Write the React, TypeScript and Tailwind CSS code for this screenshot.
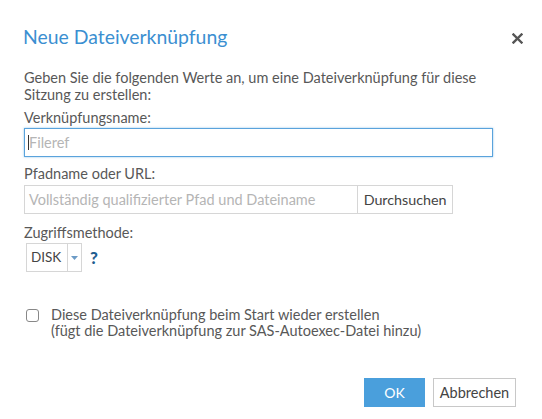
const font = { fontFamily: "Lato, 'Open Sans', sans-serif" };

export default function App() {
  return (
    <div className="h-[419px] w-[542px] bg-white text-[14.5px] text-[#585858]" style={font}>
      {/* header */}
      <div className="flex items-center justify-between pl-[23px] pr-[19px] pt-[25px]">
        <h1 className="text-[19.4px] leading-[24px] text-[#3b8fd1]">Neue Dateiverknüpfung</h1>
        <svg width="11" height="11" viewBox="0 0 11 11" className="mt-[2px]">
          <path d="M1.5 1.5 L9.5 9.5 M9.5 1.5 L1.5 9.5" stroke="#555" strokeWidth="2.4" strokeLinecap="square" />
        </svg>
      </div>

      <div className="px-[24px] pt-[20px]">
        <p className="leading-[17px]">
          Geben Sie die folgenden Werte an, um eine Dateiverknüpfung für diese
          <br />
          Sitzung zu erstellen:
        </p>

        <label className="mt-[6px] block leading-[17px]">Verknüpfungsname:</label>
        <div className="mt-[2px] flex h-[29px] w-[469px] items-center border border-[#5aa3dc] px-[3px] shadow-[0_0_2px_rgba(74,159,220,0.6)]">
          <span className="h-[15px] w-px bg-[#333]" />
          <span className="text-[#b5b5b5]">Fileref</span>
        </div>

        <label className="mt-[8px] block leading-[17px]">Pfadname oder URL:</label>
        <div className="mt-[3px] flex h-[29px] w-[429px]">
          <div className="flex w-[335px] items-center border border-[#d6d6d6] px-[4px] text-[#b5b5b5]">
            Vollständig qualifizierter Pfad und Dateiname
          </div>
          <button className="-ml-px flex w-[96px] items-center justify-center border border-[#d6d6d6] text-[14.3px] text-[#444]">
            Durchsuchen
          </button>
        </div>

        <label className="mt-[10px] block leading-[17px]">Zugriffsmethode:</label>
        <div className="mt-[2px] flex items-center gap-[8px]">
          <div className="ml-[2px] flex h-[29px] w-[56px] border border-[#d6d6d6]">
            <span className="flex w-[40px] items-center pl-[4px] text-[13.5px] text-[#444]">DISK</span>
            <span className="flex flex-1 items-center justify-center border-l border-[#d6d6d6]">
              <svg width="7" height="4" viewBox="0 0 7 4">
                <path d="M0 0 L7 0 L3.5 4 Z" fill="#6c9bc6" />
              </svg>
            </span>
          </div>
          <span className="text-[17px] font-black text-[#1f5d8f]">?</span>
        </div>

        <div className="mt-[35px] flex items-start gap-[12px]">
          <span className="ml-[2px] mt-[2px] h-[13px] w-[13px] shrink-0 rounded-[3px] border border-[#888]" />
          <p className="leading-[16px]">
            Diese Dateiverknüpfung beim Start wieder erstellen
            <br />
            (fügt die Dateiverknüpfung zur SAS-Autoexec-Datei hinzu)
          </p>
        </div>

        <div className="mt-[39px] flex justify-end gap-[8px] pr-[2px]">
          <button className="h-[29px] w-[61px] bg-[#4a9fdc] text-[14px] text-white">OK</button>
          <button className="h-[29px] w-[83px] border border-[#c8c8c8] text-[14.5px] text-[#444]">Abbrechen</button>
        </div>
      </div>
    </div>
  );
}
